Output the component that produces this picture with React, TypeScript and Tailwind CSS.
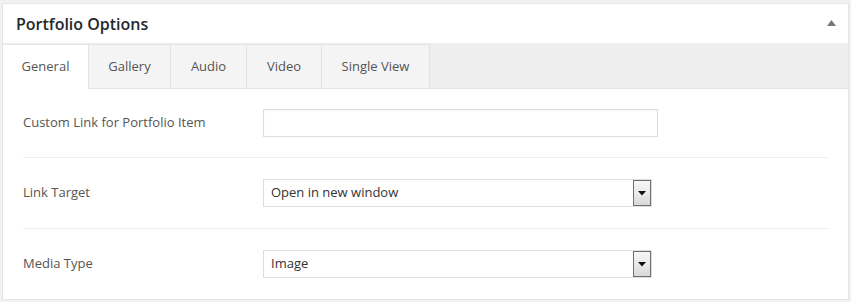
import React from "react";

const tabs = [
  { name: "General", w: "w-[86px]", active: true },
  { name: "Gallery", w: "w-[82px]", active: false },
  { name: "Audio", w: "w-[76px]", active: false },
  { name: "Video", w: "w-[75px]", active: false },
  { name: "Single View", w: "w-[108px]", active: false },
];

function FakeSelect({ value }: { value: string }) {
  return (
    <div className="flex h-[28px] w-[389px] items-stretch border border-[#dddddd] bg-white pl-[7px] text-[13px] text-[#333333]">
      <div className="flex flex-1 items-center">{value}</div>
      <div className="flex w-[18px] items-center justify-center border border-[#707070] bg-gradient-to-b from-[#f6f6f6] via-[#ebebeb] to-[#d8d8d8]">
        <svg width="8" height="5" viewBox="0 0 8 5">
          <polygon points="0,0 8,0 4,4.5" fill="#111" />
        </svg>
      </div>
    </div>
  );
}

function Row({
  label,
  children,
  last,
  pad,
}: {
  label: string;
  children: React.ReactNode;
  last?: boolean;
  pad: string;
}) {
  return (
    <div
      className={`flex items-center ${pad} ${last ? "" : "border-b border-[#eeeeee]"}`}
    >
      <div className="w-[240px] text-[13px] text-[#555555]">{label}</div>
      {children}
    </div>
  );
}

export default function App() {
  return (
    <div
      className="min-h-[302px] w-[851px] bg-[#f1f1f1] pl-[2px] pt-[3px]"
      style={{ fontFamily: '"Open Sans", "Segoe UI", sans-serif' }}
    >
      <div className="w-[847px] border border-[#e5e5e5] bg-white">
        <div className="flex h-[39px] items-center justify-between pl-[13px] pr-[12px]">
          <div className="text-[16px] font-semibold text-[#23282d]">Portfolio Options</div>
          <svg width="9" height="6" viewBox="0 0 9 6" className="mt-[-1px]">
            <polygon points="0,6 9,6 4.5,0" fill="#777" />
          </svg>
        </div>
        <div className="flex h-[46px] items-end border-b border-[#e5e5e5] bg-[#eeeeee] pt-[2px]">
          {tabs.map((t) => (
            <div
              key={t.name}
              className={`flex h-[44px] ${t.w} items-center justify-center border-r border-t border-[#e3e3e3] text-[13px] text-[#555555] ${
                t.active ? "mb-[-1px] h-[45px] bg-white" : "bg-[#f4f4f4]"
              }`}
            >
              {t.name}
            </div>
          ))}
        </div>
        <div className="px-[20px]">
          <Row label="Custom Link for Portfolio Item" pad="py-[20px]">
            <div className="h-[28px] w-[395px] border border-[#dddddd] bg-white shadow-[inset_0_1px_2px_rgba(0,0,0,0.04)]" />
          </Row>
          <Row label="Link Target" pad="py-[21px]">
            <FakeSelect value="Open in new window" />
          </Row>
          <Row label="Media Type" pad="py-[21px]" last>
            <FakeSelect value="Image" />
          </Row>
        </div>
      </div>
    </div>
  );
}
